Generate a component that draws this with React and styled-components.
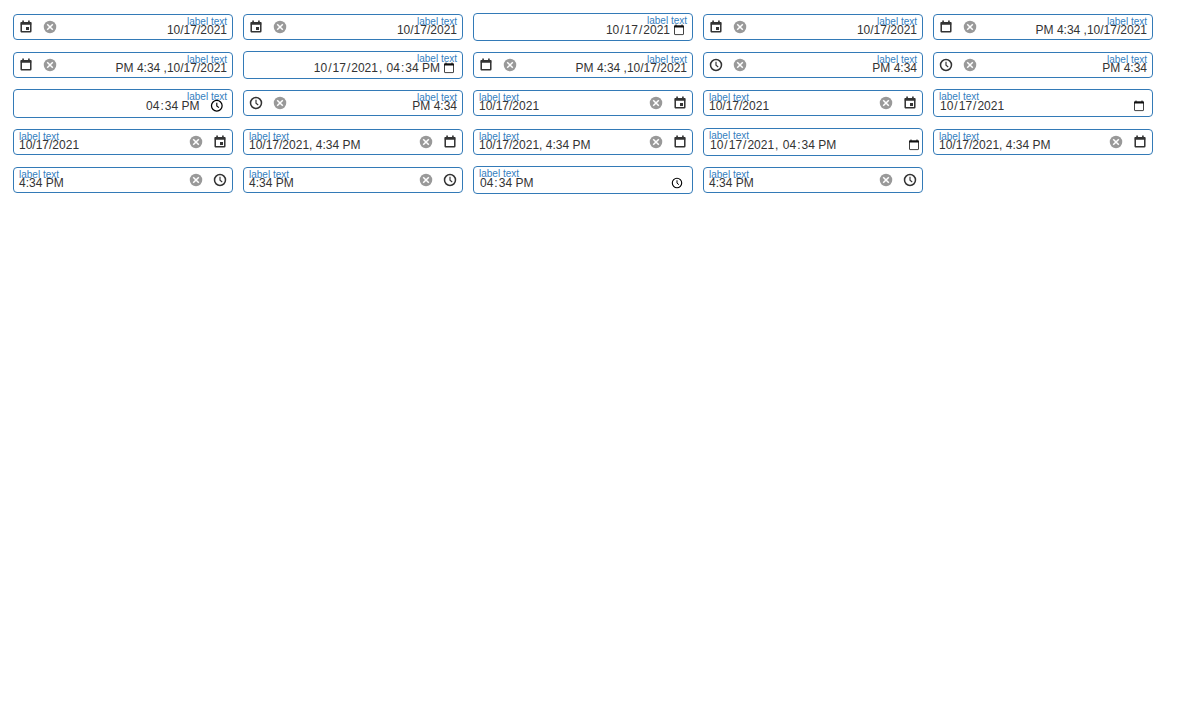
import React from 'react';
import styled, { createGlobalStyle } from 'styled-components';

const GlobalStyle = createGlobalStyle`
  body {
    margin: 0;
    background: #fff;
    font-family: "Liberation Sans", Arial, sans-serif;
  }
`;

const Board = styled.main`
  display: grid;
  grid-template-columns: repeat(5, 220px);
  grid-template-rows: 38px 38px 39px 38px 38px;
  column-gap: 10px;
  align-items: start;
  padding: 13px;
`;

const Field = styled.div`
  position: relative;
  box-sizing: border-box;
  display: flex;
  flex-direction: ${p => (p.$rtl ? 'row-reverse' : 'row')};
  align-items: center;
  height: ${p => p.$height}px;
  margin-top: ${p => (p.$native ? 0 : 1)}px;
  padding: 0 5px ${p => (p.$height === 29 ? 1 : 0)}px;
  border: 1px solid #337ab7;
  border-radius: 4px;
  background: #fff;
`;

const Label = styled.label`
  position: absolute;
  top: 1px;
  ${p => (p.$rtl ? 'right' : 'left')}: 5px;
  font-size: 10px;
  line-height: 12px;
  color: #3580c0;
  white-space: nowrap;
`;

const Value = styled.span`
  flex: 1;
  padding-top: ${p => (p.$native ? 6 : 5)}px;
  font-size: 12px;
  line-height: 14px;
  color: #333;
  text-align: ${p => (p.$rtl ? 'right' : 'left')};
  white-space: pre;
`;

const Segment = styled.span`
  padding: 0 1px;
`;

const Buttons = styled.span`
  display: flex;
  flex-direction: ${p => (p.$rtl ? 'row-reverse' : 'row')};
  gap: 10px;
`;

const Icon = styled.svg`
  display: block;
  width: ${p => p.$size || 14}px;
  height: ${p => p.$size || 14}px;
  color: ${p => p.$color || '#333'};
  fill: none;
  stroke: currentColor;
  stroke-width: ${p => p.$weight || 2.6};
`;

const Solid = styled.path`
  fill: currentColor;
  stroke: none;
`;

const Disc = styled.circle`
  fill: currentColor;
  stroke: none;
`;

const Cross = styled.path`
  stroke: #fff;
  stroke-width: 2.6;
`;

const Picker = styled.span`
  flex: none;
  padding-top: ${p => (p.$clock ? 6 : 5)}px;
  margin-left: ${p => p.$before}px;
  margin-right: ${p => p.$after}px;
`;

const values = {
  ltr: { date: '10/17/2021', datetime: '10/17/2021, 4:34 PM', time: '4:34 PM' },
  rtl: { date: '10/17/2021', datetime: 'PM 4:34 ,10/17/2021', time: 'PM 4:34' },
};
const segmented = {
  date: '10/17/2021',
  datetime: '10/17/2021, 04:34 PM',
  time: '04:34 PM',
};

// [gap before the icon, gap after it, icon size]
const pickerMetrics = {
  ltr: { date: [0, 2, 12], datetime: [0, -3, 12], time: [0, 4, 12] },
  rtl: { date: [2, 2, 12], datetime: [2, 2, 12], time: [10, 3, 13.6] },
};

function ClearIcon() {
  return (
    <Icon viewBox="0 0 24 24" $color="#999">
      <Disc cx="12" cy="12" r="10.7" />
      <Cross d="M7.2 7.2l9.6 9.6M16.8 7.2l-9.6 9.6" />
    </Icon>
  );
}

function ClockIcon({ size, color, weight }) {
  return (
    <Icon viewBox="0 0 24 24" $size={size} $color={color} $weight={weight}>
      <circle cx="12" cy="12" r="9.4" />
      <path d="M12 6.5v5.8l3.8 3" strokeWidth="2" />
    </Icon>
  );
}

function CalendarIcon({ marked }) {
  return (
    <Icon viewBox="0 0 24 24">
      <rect x="3.8" y="4.6" width="16.4" height="15.6" rx="1" />
      <Solid d="M3 3.4h18v4.8H3zM5.6 1h2.8v3H5.6zM15.6 1h2.8v3h-2.8z" />
      {marked && <Solid d="M12 12h5.2v5.2H12z" />}
    </Icon>
  );
}

function NativeCalendarIcon({ size }) {
  return (
    <Icon viewBox="0 0 24 24" $size={size} $color="#111" $weight={1.6}>
      <rect x="3" y="4" width="18" height="17.2" rx="1" />
      <Solid d="M2.2 3h19.6v4H2.2zM5 1h2v3H5zM17 1h2v3h-2z" />
    </Icon>
  );
}

function CustomField({ type, rtl }) {
  return (
    <Field $height={26} $rtl={rtl}>
      <Label $rtl={rtl}>label text</Label>
      <Value $rtl={rtl}>{values[rtl ? 'rtl' : 'ltr'][type]}</Value>
      <Buttons $rtl={rtl}>
        <ClearIcon />
        {type === 'time' ? <ClockIcon /> : <CalendarIcon marked={type === 'date'} />}
      </Buttons>
    </Field>
  );
}

function NativeField({ type, rtl }) {
  const [before, after, size] = pickerMetrics[rtl ? 'rtl' : 'ltr'][type];
  const isClock = type === 'time';
  return (
    <Field $native $height={rtl && isClock ? 29 : 28}>
      <Label $rtl={rtl}>label text</Label>
      <Value $native $rtl={rtl}>
        {segmented[type].split(/(\d+(?: PM)?)/).filter(Boolean).map((part, i) =>
          /\d/.test(part) ? <Segment key={i}>{part}</Segment> : part
        )}
      </Value>
      <Picker $clock={isClock} $before={before} $after={after}>
        {isClock
          ? <ClockIcon size={size} color="#000" weight={2.2} />
          : <NativeCalendarIcon size={size} />}
      </Picker>
    </Field>
  );
}

const fields = [
  ['date', true], ['date', true], ['date', true, true], ['date', true], ['datetime', true],
  ['datetime', true], ['datetime', true, true], ['datetime', true], ['time', true], ['time', true],
  ['time', true, true], ['time', true], ['date'], ['date'], ['date', false, true],
  ['date'], ['datetime'], ['datetime'], ['datetime', false, true], ['datetime'],
  ['time'], ['time'], ['time', false, true], ['time'],
];

export default function App() {
  return (
    <>
      <GlobalStyle />
      <Board>
        {fields.map(([type, rtl, native], i) =>
          native
            ? <NativeField key={i} type={type} rtl={rtl} />
            : <CustomField key={i} type={type} rtl={rtl} />
        )}
      </Board>
    </>
  );
}
